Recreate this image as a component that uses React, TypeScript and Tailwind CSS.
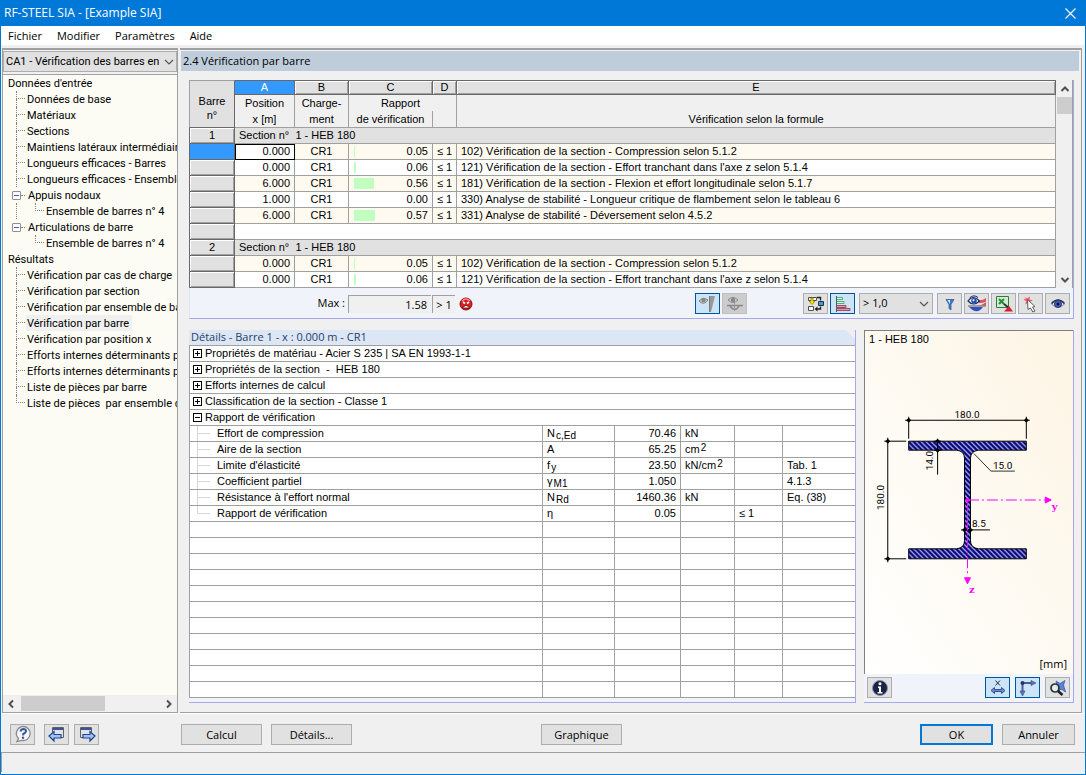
import type { ReactNode } from 'react';
import { clsx } from 'clsx';

const inputTree = [
  { label: 'Données de base' },
  { label: 'Matériaux' },
  { label: 'Sections' },
  { label: 'Maintiens latéraux intermédiaires' },
  { label: 'Longueurs efficaces - Barres' },
  { label: 'Longueurs efficaces - Ensembles de barres' },
  { label: 'Appuis nodaux', children: ['Ensemble de barres n° 4'] },
  { label: 'Articulations de barre', children: ['Ensemble de barres n° 4'] },
];

const resultTree = [
  { label: 'Vérification par cas de charge' },
  { label: 'Vérification par section' },
  { label: 'Vérification par ensemble de barres' },
  { label: 'Vérification par barre', active: true },
  { label: 'Vérification par position x' },
  { label: 'Efforts internes déterminants par barre' },
  { label: 'Efforts internes déterminants par ensemble' },
  { label: 'Liste de pièces par barre' },
  { label: 'Liste de pièces  par ensemble de barres' },
];

type Check = { x: string; lc: string; ratio: number; text: string };

const checks: Check[] = [
  { x: '0.000', lc: 'CR1', ratio: 0.05, text: '102) Vérification de la section - Compression selon 5.1.2' },
  { x: '0.000', lc: 'CR1', ratio: 0.06, text: "121) Vérification de la section - Effort tranchant dans l'axe z selon 5.1.4" },
  { x: '6.000', lc: 'CR1', ratio: 0.56, text: '181) Vérification de la section - Flexion et effort longitudinale selon 5.1.7' },
  { x: '1.000', lc: 'CR1', ratio: 0, text: '330) Analyse de stabilité - Longueur critique de flambement selon le tableau 6' },
  { x: '6.000', lc: 'CR1', ratio: 0.57, text: '331) Analyse de stabilité - Déversement selon 4.5.2' },
];

const groups = [
  'Propriétés de matériau - Acier S 235 | SA EN 1993-1-1',
  'Propriétés de la section  -  HEB 180',
  'Efforts internes de calcul',
  'Classification de la section - Classe 1',
];

const details: { name: string; sym: ReactNode; value: string; unit?: ReactNode; limit?: string; ref?: string }[] = [
  { name: 'Effort de compression', sym: <>N <Sub>c,Ed</Sub></>, value: '70.46', unit: 'kN' },
  { name: 'Aire de la section', sym: 'A', value: '65.25', unit: <>cm <Sup>2</Sup></> },
  { name: "Limite d'élasticité", sym: <>f <Sub>y</Sub></>, value: '23.50', unit: <>kN/cm <Sup>2</Sup></>, ref: 'Tab. 1' },
  { name: 'Coefficient partiel', sym: <>γ <Sub>M1</Sub></>, value: '1.050', ref: '4.1.3' },
  { name: "Résistance à l'effort normal", sym: <>N <Sub>Rd</Sub></>, value: '1460.36', unit: 'kN', ref: 'Eq. (38)' },
  { name: 'Rapport de vérification', sym: 'η', value: '0.05', limit: '≤ 1' },
];

const gridFont = "font-['Liberation_Sans',Arial,sans-serif] text-[11px]";
const line = 'border-[#a0a0a0]';

function Sub({ children }: { children: ReactNode }) {
  return <span className="relative top-[2px] -ml-[2px] text-[10px]">{children}</span>;
}

function Sup({ children }: { children: ReactNode }) {
  return <span className="relative -top-[2px] -ml-[2px] text-[10px]">{children}</span>;
}

function Chevron({ className }: { className?: string }) {
  return (
    <svg viewBox="0 0 10 6" className={clsx('h-[6px] w-[10px]', className)} fill="none" stroke="#555" strokeWidth="1.2">
      <path d="M1 1l4 4 4-4" />
    </svg>
  );
}

function ScrollArrow({ className }: { className?: string }) {
  return (
    <svg viewBox="0 0 10 10" className={clsx('size-[10px]', className)} fill="none" stroke="#505050" strokeWidth="2">
      <path d="M1.5 7L5 3.5 8.5 7" />
    </svg>
  );
}

/* ---------- tree ---------- */

function Branch({ last }: { last?: boolean }) {
  return (
    <span className="flex h-4 w-[9px] shrink-0 flex-col">
      <span className="h-2 w-full border-b border-l border-dotted border-[#808080]" />
      <span className={clsx('h-2 w-full border-dotted border-[#808080]', !last && 'border-l')} />
    </span>
  );
}

function Toggle({ label }: { label: string }) {
  return (
    <button
      aria-label={`Réduire ${label}`}
      className="flex size-[9px] shrink-0 items-center justify-center rounded-[1px] border border-[#919191] bg-white"
    >
      <span className="h-px w-[5px] bg-[#3f5fb0]" />
    </button>
  );
}

function Tree() {
  return (
    <div className="min-h-0 flex-1 overflow-hidden whitespace-pre bg-[#fcfcf4] leading-[18px]">
      <div className="h-4 pl-[5px]">Données d'entrée</div>
      <ul>
        {inputTree.map((n, i) => {
          const last = i === inputTree.length - 1;
          return (
            <li key={n.label}>
              {n.children ? (
                <div className="flex h-4 items-center pl-[9px]">
                  <Toggle label={n.label} />
                  <span className="w-[4px] border-b border-dotted border-[#808080]" />
                  <span className="h-4 pl-[3px]">{n.label}</span>
                </div>
              ) : (
                <div className="flex h-4 pl-[13px]">
                  <Branch last={last} />
                  <span className="pl-[2px]">{n.label}</span>
                </div>
              )}
              {n.children?.map((c) => (
                <div key={c} className="flex h-4 pl-[13px]">
                  <span className={clsx('w-[19px] shrink-0 border-dotted border-[#808080]', !last && 'border-l')} />
                  <Branch last />
                  <span className="pl-[2px]">{c}</span>
                </div>
              ))}
            </li>
          );
        })}
      </ul>
      <div className="h-4 pl-[5px]">Résultats</div>
      <ul>
        {resultTree.map((n, i) => (
          <li key={n.label} className="flex h-4 pl-[13px]">
            <Branch last={i === resultTree.length - 1} />
            <span className={clsx('ml-px pr-[3px] pl-px', n.active && 'bg-[#f0f0f0]')}>{n.label}</span>
          </li>
        ))}
      </ul>
    </div>
  );
}

function Sidebar() {
  return (
    <aside className={clsx("flex w-[176px] shrink-0 flex-col border border-t-2 font-['Roboto',sans-serif]", line)}>
      <div className="relative mt-px">
        <select
          aria-label="Cas de calcul"
          className="block h-[21px] w-full appearance-none overflow-hidden border border-[#adadad] bg-[#e1e1e1] pt-px pr-[17px] pl-[2px]"
        >
          <option>CA1 - Vérification des barres en acier</option>
        </select>
        <Chevron className="pointer-events-none absolute top-[8px] right-[3px]" />
      </div>
      <div className={clsx('mt-[2px] border-t', line)} />
      <Tree />
      <div className="flex h-[17px] items-center bg-[#f0f0f0] px-[3px]">
        <ScrollArrow className="-rotate-90" />
        <span className="ml-[5px] h-[15px] w-[84px] bg-[#cdcdcd]" />
        <ScrollArrow className="ml-auto rotate-90" />
      </div>
    </aside>
  );
}

/* ---------- results grid ---------- */

function RowHead({ children, active }: { children?: ReactNode; active?: boolean }) {
  return (
    <th
      scope="row"
      className={clsx(
        'h-4 border-r border-b border-l border-[#696969] p-0 text-center font-normal',
        active ? 'bg-[#3399ff]' : 'bg-[#e1e1e1] shadow-[inset_1px_1px_0_#fff,inset_-1px_-1px_0_#a0a0a0]',
      )}
    >
      {children}
    </th>
  );
}

function SectionRow({ n }: { n: number }) {
  return (
    <tr>
      <RowHead>{n}</RowHead>
      <td colSpan={5} className={clsx('h-4 border-r border-b bg-[#e1e1e1] p-0 pl-1', line)}>
        Section n°  1 - HEB 180
      </td>
    </tr>
  );
}

function CheckRow({ c, tinted, active }: { c: Check; tinted: boolean; active?: boolean }) {
  const cell = clsx('h-4 border-r border-b p-0', line);
  return (
    <tr className={tinted ? 'bg-[#fffaf0]' : 'bg-white'}>
      <RowHead active={active} />
      <td className={clsx(cell, 'pr-1 text-right', active && 'bg-white outline outline-1 -outline-offset-1 outline-black')}>{c.x}</td>
      <td className={clsx(cell, 'text-center')}>{c.lc}</td>
      <td className={cell}>
        <div className="flex items-center justify-between pr-1 pl-[5px]">
          <span className="h-[11px] bg-[#c0ffc0]" style={{ width: Math.floor(c.ratio * 37) }} />
          {c.ratio.toFixed(2)}
        </div>
      </td>
      <td className={clsx(cell, 'text-center')}>≤ 1</td>
      <td className={clsx(cell, 'pl-1')}>{c.text}</td>
    </tr>
  );
}

function ResultsGrid() {
  const head = clsx('border-r border-b bg-[#f0f0f0] p-0 font-normal leading-4', line);
  return (
    <div className="flex border-r border-[#a8a8e8]">
      <table className={clsx('min-w-0 flex-1 table-fixed border-separate border-spacing-0 whitespace-pre leading-[15px]', gridFont)}>
        <colgroup>
          <col className="w-[46px]" />
          <col className="w-[60px]" />
          <col className="w-[54px]" />
          <col className="w-[84px]" />
          <col className="w-[24px]" />
          <col />
        </colgroup>
        <thead>
          <tr>
            <th rowSpan={2} className="border border-[#a0a0a0] border-r-[#696969] border-b-[#696969] bg-[#e1e1e1] p-0 pt-[8px] font-normal leading-[14px]">
              Barre{'\n'}n°
            </th>
            {['A', 'B', 'C', 'D', 'E'].map((l) => (
              <th
                key={l}
                className={clsx(
                  'h-[15px] border-t border-r border-b border-[#696969] p-0 font-normal leading-[13px]',
                  l === 'A'
                    ? 'bg-[#3399ff] text-white'
                    : 'bg-[#e1e1e1] shadow-[inset_1px_1px_0_#fff,inset_-1px_-1px_0_#a0a0a0]',
                )}
              >
                {l}
              </th>
            ))}
          </tr>
          <tr>
            <th className={head}>Position{'\n'}x [m]</th>
            <th className={head}>Charge-{'\n'}ment</th>
            <th colSpan={2} className={head}>
              <div className="pr-[4px]">Rapport</div>
              <div className="grid grid-cols-[1fr_23px]">
                <span className={clsx('border-r', line)}>de vérification</span>
              </div>
            </th>
            <th className={clsx(head, 'align-bottom')}>Vérification selon la formule</th>
          </tr>
        </thead>
        <tbody>
          <SectionRow n={1} />
          {checks.map((c, i) => (
            <CheckRow key={c.text} c={c} tinted={i % 2 === 0} active={i === 0} />
          ))}
          <tr>
            <RowHead />
            <td colSpan={5} className={clsx('h-4 border-r border-b bg-white p-0', line)} />
          </tr>
          <SectionRow n={2} />
          {checks.slice(0, 2).map((c, i) => (
            <CheckRow key={c.text} c={c} tinted={i === 0} />
          ))}
        </tbody>
      </table>
      <div className={clsx('ml-px flex w-[16px] flex-col items-center border-r bg-[#f0f0f0]', line)}>
        <ScrollArrow className="mt-[4px]" />
        <span className="mt-[3px] h-[17px] w-full bg-[#cdcdcd]" />
        <ScrollArrow className="mt-auto mb-[3px] rotate-180" />
      </div>
    </div>
  );
}

/* ---------- icons ---------- */

function Icon({ children }: { children: ReactNode }) {
  return (
    <svg viewBox="0 0 20 18" className="h-[18px] w-[20px] shrink-0" fill="none">
      {children}
    </svg>
  );
}

const icons = {
  eyeDiagram: (
    <Icon>
      <path d="M1 6q4-4.500 9-1-4 6-9 1z" fill="#c8c8c8" stroke="#808080" />
      <circle cx="5.500" cy="5" r="2.200" fill="#888" />
      <path d="M12 1h5l-4 16h-1z" fill="#999" />
      <path d="M11.500 1v16" stroke="#777" />
    </Icon>
  ),
  eyeSection: (
    <Icon>
      <path d="M3 5q5-5 10 0-5 5-10 0z" fill="#ccc" stroke="#888" />
      <circle cx="8" cy="5" r="2.200" fill="#888" />
      <path d="M2 10.500h16M5 11q5 7 9 0" stroke="#888" strokeWidth="1.500" />
      <path d="M9.500 8v8" stroke="#999" />
    </Icon>
  ),
  transfer: (
    <Icon>
      <path d="M2.500 2.500h8v3h-8zM2.500 11.500h5v4h-5z" fill="#f4f4f4" stroke="#505050" />
      <path d="M5 3h2v3h2l-3 3.500L3 6h2z" fill="#ffe800" stroke="#807000" strokeWidth=".7" />
      <path d="M11 2.500h3.500v3M14.500 11.500v2.500h-4" stroke="#222" strokeWidth="1.400" />
      <path d="M8.500 14l3-2.500v5z" fill="#222" />
      <path d="M12.500 6.500h5v4h-5z" fill="#3a9cf0" stroke="#303030" />
    </Icon>
  ),
  bars: (
    <Icon>
      <path d="M3.500 1v16" stroke="#506060" />
      <path d="M4 2.500h5.500v2H4M4 6.500h7v2H4" fill="#d8f4e0" stroke="#52b080" />
      <path d="M4 10.500h9v2H4M4 13.500h13v2H4" fill="#d8a0ac" stroke="#a84860" />
    </Icon>
  ),
  filter: (
    <Icon>
      <path d="M6 4.500h8l-3 5v5.500l-2-1.500V9.500z" fill="#3a78d8" stroke="#3c5c94" strokeWidth=".8" />
      <path d="M7.500 5h2.500v4z" fill="#d4ecff" />
    </Icon>
  ),
  colors: (
    <Icon>
      <path d="M12 5q3 1 7-2v3.500q-4 2-7 1.500zM10 10.500q5 0 9-3.500v3.500z" fill="#e0525a" />
      <path d="M2 12h14q-6 8.500-14 0z" fill="#3450c0" />
      <path d="M1 6q5.500-7 11.500 0-6 6-11.500 0z" fill="#eef4ff" stroke="#182860" strokeWidth="1.200" />
      <path d="M2.500 3q4-4 8.500-.5" stroke="#182860" />
      <circle cx="7" cy="5.800" r="2.800" fill="#2450a8" />
      <circle cx="6.500" cy="5.300" r="1" fill="#fff" />
      <path d="M1 11h18" stroke="#606060" />
    </Icon>
  ),
  excel: (
    <Icon>
      <path d="M2.500 1.500h12v11h-12z" fill="#d4ecd4" stroke="#2c7a3c" />
      <path d="M5 4l5 5M10 4L5 9" stroke="#268a38" strokeWidth="2" />
      <path d="M10 9l5 4" stroke="#333" strokeWidth="2" />
      <path d="M10 16.500l5-5.500 4 5.500z" fill="#d82030" />
    </Icon>
  ),
  pick: (
    <Icon>
      <path d="M3 1.500l3 2 3-2-.5 3 3.500 1-4 1.500-3.500 2.500.5-3.500-2.500-1.500 2.500-1z" fill="#f05868" />
      <path d="M6.500 4.500l7.500 7-2.500.500 2.500 4-2.200 1-2.300-4-2.500 1.500z" fill="#fafafa" stroke="#606060" />
    </Icon>
  ),
  view: (
    <Icon>
      <path d="M3.500 9q6.500-8 13 0-6.500 7-13 0z" fill="#d4dcec" stroke="#8a8a98" />
      <path d="M3.500 8.500q6.500-7 13 0" stroke="#282c48" strokeWidth="1.400" />
      <circle cx="10" cy="9" r="3.500" fill="#4060c0" stroke="#283880" />
      <circle cx="10" cy="9" r="1.500" fill="#0a1030" />
    </Icon>
  ),
  info: (
    <Icon>
      <circle cx="10" cy="9" r="7.500" fill="#1c2348" stroke="#8b93b0" />
      <path d="M8 7.500h3V13h1.500v1.500h-5V13H9V9H8z" fill="#fff" />
      <circle cx="10" cy="4.700" r="1.500" fill="#fff" />
    </Icon>
  ),
  dimX: (
    <Icon>
      <path d="M7.500 1.500l4.500 5M12 1.500l-4.500 5" stroke="#303040" />
      <path d="M3 11.500l3.500-3v2h7v-2l3.500 3-3.500 3v-2h-7v2z" fill="#6c8bd0" stroke="#35508e" />
    </Icon>
  ),
  axes: (
    <Icon>
      <path d="M3 4h12M4.500 4v9" stroke="#4a5c90" strokeWidth="2" />
      <path d="M13 1.500L18 4l-5 2.500zM2 12l2.500 5L7 12z" fill="#5a78b8" stroke="#34477a" strokeWidth=".6" />
      <circle cx="4.500" cy="4" r="2" fill="#26345e" />
    </Icon>
  ),
  zoomAll: (
    <Icon>
      <path d="M8 2l4 2.500L17 1.500l-1.500 4.500 2 7-4.500-3-3 3-.5-4z" fill="#5683d8" stroke="#3c5ea8" strokeWidth=".8" />
      <circle cx="7" cy="9" r="4" fill="#e9eef6" fillOpacity=".8" stroke="#303030" strokeWidth="1.700" />
      <path d="M10 12l4.500 4" stroke="#222" strokeWidth="2.600" />
    </Icon>
  ),
  help: (
    <Icon>
      <path d="M10 1.500a7 7 0 1 1-1.500 13.800L4 16.500l1.500-3A7 7 0 0 1 10 1.500z" fill="#f4f6fa" stroke="#8a8a90" strokeWidth="1.300" />
      <path d="M7.500 6.500q.5-2.500 3-2.500 2.700.2 2.500 2.300-.4 1.700-2.800 2.700v1.500" stroke="#3c5a98" strokeWidth="2" />
      <circle cx="10" cy="12.800" r="1.200" fill="#3c5a98" />
    </Icon>
  ),
  prev: (
    <Icon>
      <path d="M5.500 2.500h11v10h-11z" fill="#dfe2e8" stroke="#606060" />
      <path d="M6 3h10v2H6z" fill="#40509a" />
      <path d="M2 11l5-4.500v3h7v3.500H7v3z" fill="#9cc4f4" stroke="#23458c" strokeWidth="1.200" />
    </Icon>
  ),
  next: (
    <Icon>
      <path d="M3.500 2.500h11v10h-11z" fill="#dfe2e8" stroke="#606060" />
      <path d="M4 3h10v2H4z" fill="#40509a" />
      <path d="M18 11l-5-4.500v3H6v3.500h7v3z" fill="#9cc4f4" stroke="#23458c" strokeWidth="1.200" />
    </Icon>
  ),
};

function IconButton({ label, icon, on, disabled }: { label: string; icon: ReactNode; on?: boolean; disabled?: boolean }) {
  return (
    <button
      aria-label={label}
      disabled={disabled}
      className={clsx(
        'flex h-[21px] w-[25px] shrink-0 items-center justify-center border',
        on && 'border-[#005499] bg-[#cce4f7]',
        disabled && 'border-[#bfbfbf] bg-[#cccccc]',
        !on && !disabled && 'border-[#adadad] bg-[#e1e1e1]',
      )}
    >
      {icon}
    </button>
  );
}

function GridFooter() {
  const field = clsx('h-[18px] border-t border-l pt-px leading-4', line);
  return (
    <div className="flex h-[31px] items-center border-r border-b border-l border-r-[#a8a8e8] border-b-[#a8a8e8] border-l-[#dce6f5] bg-[#f0f4fa] pt-px pr-[3px]">
      <span className="w-[155px] text-right">Max :</span>
      <output className={clsx(field, 'ml-[3px] w-[83px] bg-[#f0f0f0] pr-1 text-right')}>1.58</output>
      <span className={clsx(field, 'ml-px w-[23px] bg-[#f0f0f0] text-center')}>&gt; 1</span>
      <svg viewBox="0 0 14 14" className="ml-[4px] size-[14px]">
        <circle cx="7" cy="7" r="6" fill="#dc1c20" stroke="#8a1518" />
        <path d="M3 4q4-4 8 0" fill="none" stroke="#ff8d86" strokeWidth="1.500" />
        <path d="M3.500 11q3.500-5 7 0z" fill="#fff" stroke="#400" strokeWidth=".7" />
        <path d="M4 5l2 1.500M10 5L8 6.500" stroke="#fff" strokeWidth="1.600" />
      </svg>
      <div className="ml-auto flex items-center gap-[2px]">
        <IconButton label="Diagramme coloré" icon={icons.eyeDiagram} on />
        <IconButton label="Afficher la section" icon={icons.eyeSection} disabled />
        <span className="w-[52px]" />
        <IconButton label="Transférer" icon={icons.transfer} />
        <IconButton label="Barres de rapport" icon={icons.bars} on />
        <div className="relative mx-[2px]">
          <select aria-label="Filtre" className="block h-[21px] w-[74px] appearance-none border border-[#adadad] bg-[#e1e1e1] pl-[3px]">
            <option>&gt; 1,0</option>
          </select>
          <Chevron className="pointer-events-none absolute top-[8px] right-[4px]" />
        </div>
        <IconButton label="Filtrer" icon={icons.filter} />
        <IconButton label="Couleurs" icon={icons.colors} />
        <IconButton label="Exporter vers Excel" icon={icons.excel} />
        <IconButton label="Sélectionner" icon={icons.pick} />
        <IconButton label="Mode de vue" icon={icons.view} />
      </div>
    </div>
  );
}

/* ---------- details ---------- */

function ExpandBox({ open }: { open?: boolean }) {
  return (
    <button aria-label={open ? 'Réduire' : 'Développer'} aria-expanded={!!open} className="size-[9px] shrink-0 border border-black bg-white">
      <svg viewBox="0 0 7 7" className="size-[7px]" stroke="#000">
        <path d={open ? 'M1 3.500h5' : 'M1 3.500h5M3.500 1v5'} />
      </svg>
    </button>
  );
}

function Details() {
  const cell = clsx('h-4 border-r border-b p-0 px-1', line);
  return (
    <section className="flex min-w-0 flex-1 flex-col border-r border-b border-[#a8a8e8]">
      <h2 className={clsx('h-4 border-b bg-[#dce6f5] pl-[2px] leading-[14px] text-[#1f3f66] [clip-path:polygon(0_0,calc(100%-9px)_0,100%_9px,100%_100%,0_100%)]', line)}>
        Détails - Barre 1 - x : 0.000 m - CR1
      </h2>
      <table className={clsx('w-full table-fixed border-separate border-spacing-0 border-l bg-white whitespace-pre leading-[15px]', line, gridFont)}>
        <colgroup>
          <col />
          <col className="w-[72px]" />
          <col className="w-[66px]" />
          <col className="w-[54px]" />
          <col className="w-[48px]" />
          <col className="w-[72px]" />
        </colgroup>
        <tbody>
          {[...groups, 'Rapport de vérification'].map((g, i) => (
            <tr key={g}>
              <td colSpan={6} className={clsx('h-4 border-b p-0', line)}>
                <div className="flex items-center gap-[3px] pl-[3px]">
                  <ExpandBox open={i === groups.length} />
                  {g}
                </div>
              </td>
            </tr>
          ))}
          {details.map((d, i) => (
            <tr key={d.name}>
              <td className={clsx(cell, 'pl-[7px]')}>
                <div className="flex h-[15px]">
                  <span className="flex w-[20px] flex-col">
                    <span className="h-2 w-[13px] border-b border-l border-[#d8d8d8]" />
                    <span className={clsx('h-[7px] border-[#d8d8d8]', i < details.length - 1 && 'border-l')} />
                  </span>
                  {d.name}
                </div>
              </td>
              <td className={cell}><div className="h-[15px]">{d.sym}</div></td>
              <td className={clsx(cell, 'text-right')}>{d.value}</td>
              <td className={cell}><div className="h-[15px]">{d.unit}</div></td>
              <td className={cell}>{d.limit}</td>
              <td className={clsx(cell, 'border-r-0')}>{d.ref}</td>
            </tr>
          ))}
          {Array.from({ length: 11 }, (_, r) => (
            <tr key={r}>
              {[0, 1, 2, 3, 4, 5].map((c) => (
                <td key={c} className={clsx(cell, c === 5 && 'border-r-0')} />
              ))}
            </tr>
          ))}
        </tbody>
      </table>
      <div className="flex-1 bg-[#f0f4fa]" />
    </section>
  );
}

/* ---------- section preview ---------- */

function SectionDrawing() {
  return (
    <svg viewBox="865 346 208 308" className="min-h-0 w-full flex-1" fontFamily="Roboto, 'Liberation Sans', sans-serif" fontSize="10">
      <defs>
        <pattern id="hatch" width="5" height="5" patternUnits="userSpaceOnUse">
          <rect width="5" height="5" fill="#000080" />
          <path d="M-1 -1l7 7M-1 4l2 2M4 -1l2 2" stroke="#d0d0f0" strokeWidth="1.200" />
        </pattern>
      </defs>
      <path
        d="M908.500 440.500h118v9h-48q-8 1-8 8v83q0 7 8 8h48v10h-118v-10h48q8-1 8-8v-83q0-7-8-8h-48z"
        fill="url(#hatch)"
        stroke="#000"
      />
      <g stroke="#000" fill="none">
        <path d="M905 419.500h125M908.500 416v22M1026.500 416v22" />
        <path d="M887.500 437v125M884 440.500h22M884 558.500h22" />
        <path d="M937.500 438v36M934 440.500h7M934 449.500h7" />
        <path d="M974 453l17 17.500h24" strokeWidth=".8" />
        <path d="M961 529.500h29" />
      </g>
      <g fill="#000">
        <path d="M906 419.500l2.500-2.500 2.500 2.500-2.500 2.500zM1024 419.500l2.500-2.500 2.500 2.500-2.500 2.500z" />
        <path d="M885 440.500l2.500-2.500 2.500 2.500-2.500 2.500zM885 558.500l2.500-2.500 2.500 2.500-2.500 2.500z" />
        <path d="M935 440.500l2.500-2.500 2.500 2.500-2.500 2.500zM935 449.500l2.500-2.500 2.500 2.500-2.500 2.500z" />
        <path d="M962 529.500l2.500-2.500 2.500 2.500-2.500 2.500zM968 529.500l2.500-2.500 2.500 2.500-2.500 2.500z" />
        <text x="967" y="417" textAnchor="middle">180.0</text>
        <text x="993" y="468">15.0</text>
        <text x="972" y="527">8.5</text>
        <text transform="translate(884 497) rotate(-90)" textAnchor="middle">180.0</text>
        <text transform="translate(933 460) rotate(-90)" textAnchor="middle">14.0</text>
      </g>
      <g stroke="#f0f" fill="#f0f">
        <path d="M968 499.500h77" strokeDasharray="11 3 2 3" />
        <path d="M967.500 500v76" strokeDasharray="11 3 2 3" />
        <circle cx="967.500" cy="499.500" r="1.500" />
        <path d="M1045.500 496.500l6 3-6 3zM964.500 577.500h6l-3 6z" />
      </g>
      <g fill="#f0f" fontFamily="'DejaVu Serif', serif" fontSize="10" fontWeight="bold">
        <text x="1052" y="510">y</text>
        <text x="969" y="593">z</text>
      </g>
    </svg>
  );
}

function Preview() {
  return (
    <section className="flex w-[210px] shrink-0 flex-col border-r border-b border-[#a8a8e8]">
      <div className="flex min-h-0 flex-1 flex-col border-t border-l border-[#808080] bg-gradient-to-tr from-white to-[#fdf5e4]">
        <h2 className="pl-1 font-['Liberation_Sans',Arial,sans-serif] text-[11px] leading-4">1 - HEB 180</h2>
        <SectionDrawing />
        <div className="pr-[6px] text-right leading-5">[mm]</div>
      </div>
      <div className="flex h-[28px] shrink-0 items-center gap-[5px] bg-[#f0f4fa] px-[3px] pb-px">
        <IconButton label="Informations" icon={icons.info} />
        <span className="flex-1" />
        <IconButton label="Cotes" icon={icons.dimX} on />
        <IconButton label="Axes" icon={icons.axes} on />
        <IconButton label="Zoom tout" icon={icons.zoomAll} />
      </div>
    </section>
  );
}

function PushButton({ children, className }: { children: ReactNode; className?: string }) {
  return (
    <button className={clsx('h-[21px] bg-[#e1e1e1] leading-none', className ?? 'w-[81px] border border-[#adadad]')}>
      {children}
    </button>
  );
}

export default function App() {
  return (
    <div className="flex h-screen flex-col border-x border-b border-[#0078d7] bg-[#f0f0f0] font-['Open_Sans',sans-serif] text-[11px] text-black">
      <header className="flex h-[26px] shrink-0 items-center justify-between bg-[#0078d7] pr-[9px] pl-[3px] text-[12px] text-white">
        <h1>RF-STEEL SIA - [Example SIA]</h1>
        <button aria-label="Fermer">
          <svg viewBox="0 0 11 11" className="size-[11px]" stroke="#fff" strokeWidth="1.100">
            <path d="M.5.5l10 10M10.500.5l-10 10" />
          </svg>
        </button>
      </header>
      <nav className="flex h-[19px] shrink-0 items-center gap-[15px] bg-white pt-px pl-[7px]">
        {['Fichier', 'Modifier', 'Paramètres', 'Aide'].map((m) => (
          <button key={m}>{m}</button>
        ))}
      </nav>

      <div className="mt-[3px] flex min-h-0 flex-1 gap-[2px] pr-[3px] pl-px">
        <Sidebar />
        <main className={clsx('flex min-w-0 flex-1 flex-col border-t-2 border-r border-b', line)}>
          <h2 className="mt-px mr-[2px] ml-px h-5 bg-[#bfcddb] pl-[2px] leading-5">2.4 Vérification par barre</h2>
          <div className="mt-[9px] mr-[7px] ml-[9px] flex min-h-0 flex-1 flex-col pb-[9px]">
            <ResultsGrid />
            <GridFooter />
            <div className="mt-[11px] flex min-h-0 flex-1 gap-2">
              <Details />
              <Preview />
            </div>
          </div>
        </main>
      </div>

      <footer className="flex h-[39px] shrink-0 items-center border-t border-white pt-[2px] pr-[10px] pl-[9px]">
        <IconButton label="Aide" icon={icons.help} />
        <span className="w-[9px]" />
        <IconButton label="Tableau précédent" icon={icons.prev} />
        <span className="w-[5px]" />
        <IconButton label="Tableau suivant" icon={icons.next} />
        <div className="ml-[82px] flex gap-[9px]">
          <PushButton>Calcul</PushButton>
          <PushButton>Détails...</PushButton>
        </div>
        <div className="flex flex-1 justify-center">
          <PushButton className="mr-[109px] w-[81px] border border-[#adadad]">Graphique</PushButton>
        </div>
        <div className="flex gap-[9px]">
          <PushButton className="w-[73px] border-2 border-[#0078d7]">OK</PushButton>
          <PushButton className="w-[73px] border border-[#adadad]">Annuler</PushButton>
        </div>
      </footer>
      <div className={clsx('mb-[2px] h-[20px] shrink-0 border-t border-l', line)} />
    </div>
  );
}
